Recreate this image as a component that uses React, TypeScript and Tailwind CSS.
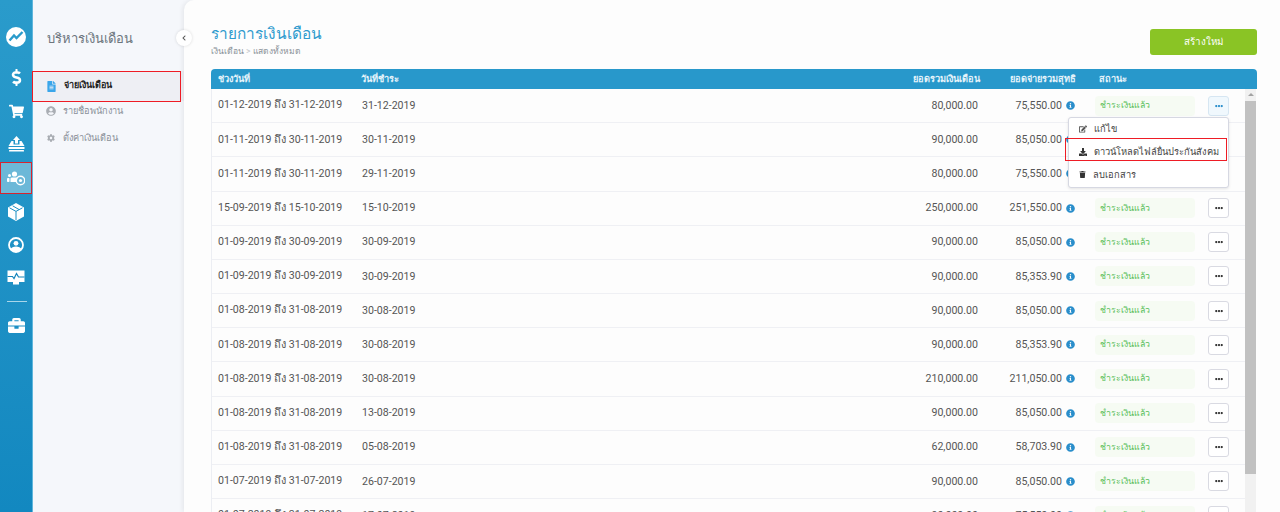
import React from "react";
import { FaDollarSign, FaShoppingCart, FaBriefcase, FaFileAlt, FaUserCircle, FaCog, FaEdit, FaDownload, FaTrash, FaInfoCircle, FaEllipsisH, FaChevronLeft } from "react-icons/fa";

const rows: [string, string, string, string][] = [
  ["01-12-2019", "31-12-2019", "80,000.00", "75,550.00"],
  ["01-11-2019", "30-11-2019", "90,000.00", "85,050.00"],
  ["01-11-2019", "29-11-2019", "80,000.00", "75,550.00"],
  ["15-09-2019", "15-10-2019", "250,000.00", "251,550.00"],
  ["01-09-2019", "30-09-2019", "90,000.00", "85,050.00"],
  ["01-09-2019", "30-09-2019", "90,000.00", "85,353.90"],
  ["01-08-2019", "30-08-2019", "90,000.00", "85,050.00"],
  ["01-08-2019", "30-08-2019", "90,000.00", "85,353.90"],
  ["01-08-2019", "30-08-2019", "210,000.00", "211,050.00"],
  ["01-08-2019", "13-08-2019", "90,000.00", "85,050.00"],
  ["01-08-2019", "05-08-2019", "62,000.00", "58,703.90"],
  ["01-07-2019", "26-07-2019", "90,000.00", "85,050.00"],
  ["01-07-2019", "17-07-2019", "90,000.00", "75,550.00"],
];
const ends: string[] = ["31-12-2019", "30-11-2019", "30-11-2019", "15-10-2019", "30-09-2019", "30-09-2019", "31-08-2019", "31-08-2019", "31-08-2019", "31-08-2019", "31-08-2019", "31-07-2019", "31-07-2019"];

const grid = "grid grid-cols-[144px_1fr_125px_96px_119px_50px] items-center";

function Rail() {
  const center = "flex items-center justify-center text-white";
  const cell = `h-[33px] ${center}`;
  return (
    <aside className="w-[33px] shrink-0 h-full bg-gradient-to-b from-[#2a9bcb] to-[#1288c0] border-r border-[#5fb6dc] flex flex-col pt-[20px]">
      <div className={`${cell} mb-[8px]`}>
        <svg width="20" height="20" viewBox="0 0 20 20"><circle cx="10" cy="10" r="10" fill="#fff" /><path d="M3.5 13.5 L8 8.5 L10.5 11 L16.5 5" fill="none" stroke="#2a9bcb" strokeWidth="2.4" /></svg>
      </div>
      <div className={`${cell} text-[17px] mb-[1px]`}><FaDollarSign /></div>
      <div className={`${cell} text-[15px]`}><FaShoppingCart /></div>
      <div className={`h-[31px] ${center}`}>
        <svg width="17" height="16" viewBox="0 0 17 16" fill="#fff"><path d="M8.5 0 L12 4 H10 V7.5 H7 V4 H5 Z" /><path d="M3.5 5 H5.5 V8.5 H11.5 V5 H13.5 L16.5 10 H0.5 Z" /><rect x="0.5" y="11" width="16" height="2" /><rect x="1" y="14" width="15" height="1.6" rx=".6" /></svg>
      </div>
      <div className="h-[32px] mt-[3px] bg-[#6cb8d8] flex items-center justify-center">
        <svg width="18" height="15" viewBox="0 0 18 15" fill="#fff"><circle cx="7.5" cy="3" r="2.6" /><circle cx="2.5" cy="4.5" r="1.5" /><rect x="0" y="7" width="2.5" height="4" rx=".8" /><path d="M3.5 7.5 Q3.5 6.5 5 6.5 H10 Q11 6.5 10 9 Q9.5 10.5 10 11 H3.5 Z" /><circle cx="13.5" cy="9.5" r="4.2" fill="none" stroke="#fff" strokeWidth="1.4" /><circle cx="13.5" cy="9.5" r="1.6" /></svg>
      </div>
      <div className={`${cell} mt-[1px]`}>
        <svg width="16" height="18" viewBox="0 0 16 18"><path d="M8 0 L16 4.5 V13.5 L8 18 L0 13.5 V4.5 Z" fill="#fff" /><path d="M1.5 4.8 L8 8.4 L14.5 4.8 M8 8.4 V17" fill="none" stroke="#1b90c4" strokeWidth="1" /><path d="M4.6 2.8 L11 6.5" stroke="#1b90c4" strokeWidth="1" /></svg>
      </div>
      <div className={cell}>
        <svg width="16" height="16" viewBox="0 0 16 16"><circle cx="8" cy="8" r="7" fill="none" stroke="#fff" strokeWidth="1.8" /><circle cx="8" cy="6.3" r="2.4" fill="#fff" /><path d="M2.6 12 Q4 9.5 8 9.5 Q12 9.5 13.4 12 Q11.5 15 8 15 Q4.5 15 2.6 12 Z" fill="#fff" /></svg>
      </div>
      <div className={cell}>
        <svg width="18" height="15" viewBox="0 0 18 15"><path d="M0.5 0.5 H17.5 V12 H0.5 Z" fill="#fff" /><rect x="6" y="12" width="6" height="2.5" fill="#fff" /><path d="M0.5 6.5 H5.5 L7 8.5 L9.5 3.5 L11.5 7 H17.5" fill="none" stroke="#1485bc" strokeWidth="1.2" /></svg>
      </div>
      <div className="h-px w-[20px] bg-[#a8d6ea] ml-[7px] mt-[7px]" />
      <div className={`${cell} text-[17px] mt-[7px]`}><FaBriefcase /></div>
    </aside>
  );
}

function SideMenu() {
  return (
    <aside className="w-[151px] shrink-0 h-full bg-[#f5f7fb]">
      <h2 className="h-[71px] pl-[14px] pt-[28px] text-[13px] leading-[22px] text-[#6c757d]">บริหารเงินเดือน</h2>
      <div className="h-[30px] bg-[#eeeff4] flex items-center pl-[13px] gap-[7px] text-[9px] font-bold text-[#222]">
        <FaFileAlt className="text-[#3aa6ea] text-[11px]" /> จ่ายเงินเดือน
      </div>
      <div className="h-[24px] mt-[-3px] pt-[1px] flex items-center pl-[13px] gap-[7px] text-[9.2px] text-[#8a9099]">
        <FaUserCircle className="text-[#a9adb3] text-[10px]" /> รายชื่อพนักงาน
      </div>
      <div className="h-[28px] mt-[2px] flex items-center pl-[14px] gap-[8px] text-[9.2px] text-[#8a9099]">
        <FaCog className="text-[#a9adb3] text-[8px]" /> ตั้งค่าเงินเดือน
      </div>
    </aside>
  );
}

function Row({ r, end, open }: { r: [string, string, string, string]; end: string; open: boolean }) {
  return (
    <div className={`${grid} h-[34.18px] shrink-0 border-b border-[#eff0f4] text-[10.6px] text-[#555]`}>
      <div className="pl-[6px] whitespace-nowrap">{r[0]} <span className="text-[11px]">ถึง</span> {end}</div>
      <div className="pl-[6px]">{r[1]}</div>
      <div className="text-right pr-[2px]">{r[2]}</div>
      <div className="flex items-center justify-end gap-[4px] pr-[1px]">
        {r[3]} <FaInfoCircle className="text-[#2a8ecb] text-[9px]" />
      </div>
      <div className="ml-[19px] w-[100px] h-[20px] rounded-[4px] bg-[#f6fbf3] text-[#5cbf5c] text-[8.8px] flex items-center pl-[5px]">ชำระเงินแล้ว</div>
      <div className="pl-[13px]">
        <button className={`w-[21px] h-[20px] rounded-[3px] border flex items-center justify-center text-[8px] ${open ? "bg-[#f0f8fd] border-[#d6e6f2] text-[#2a8ecb]" : "bg-white border-[#d9dae2] text-[#333]"}`}>
          <FaEllipsisH />
        </button>
      </div>
    </div>
  );
}

export default function App() {
  return (
    <div className="w-[1280px] h-[512px] overflow-hidden flex bg-[#f5f7fb] font-['Roboto','Noto_Sans','Liberation_Sans',sans-serif] relative">
      <Rail />
      <SideMenu />
      <main className="flex-1 h-full bg-[#fdfdfd] rounded-tl-[10px] shadow-[-2px_0_4px_rgba(0,0,0,0.06)] pl-[27px] pr-[23px] relative">
        <button className="absolute left-[-8px] top-[30px] w-[16px] h-[16px] rounded-full bg-white shadow-[0_0_3px_rgba(0,0,0,0.15)] flex items-center justify-center text-[#555] text-[6px]">
          <FaChevronLeft />
        </button>
        <header className="h-[69px] flex justify-between">
          <div className="pt-[22px]">
            <h1 className="text-[15.4px] leading-[24px] text-[#2f9bce]">รายการเงินเดือน</h1>
            <p className="text-[8.5px] leading-[11px] text-[#8b9299]">เงินเดือน <span className="text-[#c4c8cc]">&gt;</span> แสดงทั้งหมด</p>
          </div>
          <button className="mt-[29px] w-[107px] h-[26px] rounded-[3px] bg-[#8ac425] text-white text-[9.8px]">สร้างใหม่</button>
        </header>
        <section className="relative h-[443px] overflow-hidden">
          <div className={`${grid} h-[20px] pl-[1px] pr-[12px] bg-[#2898cb] rounded-t-[4px] text-[9.2px] font-bold text-[#e6f4fb]`}>
            <div className="pl-[6px]">ช่วงวันที่</div>
            <div className="pl-[5px]">วันที่ชำระ</div>
            <div className="text-right">ยอดรวมเงินเดือน</div>
            <div className="text-right">ยอดจ่ายรวมสุทธิ</div>
            <div className="pl-[23px]">สถานะ</div>
            <div />
          </div>
          <div className="flex border-l border-[#eceef3]">
            <div className="flex-1 min-w-0 flex flex-col">
              {rows.map((r, i) => <Row key={i} r={r} end={ends[i]} open={i === 0} />)}
            </div>
            <div className="w-[11px] h-[423px] mr-[1px] shrink-0 bg-[#f1f1f1] flex flex-col items-center">
              <div className="h-[11px] flex items-center justify-center">
                <div className="w-0 h-0 border-x-[3px] border-x-transparent border-b-[3px] border-b-[#a3a3a3]" />
              </div>
              <div className="w-full h-[373px] bg-[#c1c1c1] mt-[1px]" />
            </div>
          </div>
          <div className="absolute left-[857px] top-[48px] w-[161px] h-[71px] bg-white rounded-[3px] border border-[#d6d8e2] shadow-[0_1px_3px_rgba(0,0,0,0.1)] text-[9.3px] text-[#444] flex flex-col py-[1px]">
            <div className="h-[21px] flex items-center pl-[10px] gap-[7px]"><FaEdit className="text-[#555] text-[8px]" /> แก้ไข</div>
            <div className="h-[24px] flex items-center pl-[10px] gap-[7px] whitespace-nowrap"><FaDownload className="text-[#333] text-[8px]" /> ดาวน์โหลดไฟล์ยื่นประกันสังคม</div>
            <div className="h-[23px] flex items-center pl-[10px] gap-[7px]"><FaTrash className="text-[#333] text-[7px]" /> ลบเอกสาร</div>
          </div>
        </section>
      </main>
      <div className="absolute left-[32px] top-[71px] w-[149px] h-[31px] border-[1.5px] border-[#ee1c25]" />
      <div className="absolute left-0 top-[162px] w-[32px] h-[32px] border-[1.5px] border-[#d8232e]" />
      <div className="absolute left-[1065px] top-[138px] w-[162px] h-[23px] border-[1.5px] border-[#ee1c25]" />
    </div>
  );
}
